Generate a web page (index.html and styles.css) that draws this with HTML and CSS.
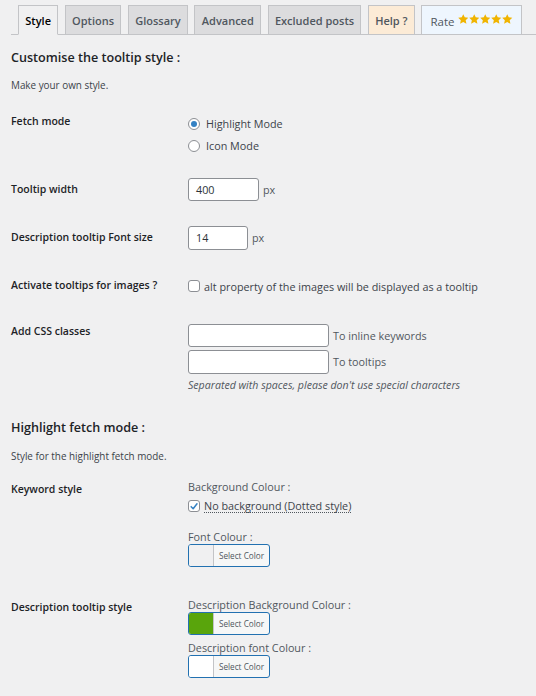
FILE: index.html
```html
<!DOCTYPE html>
<html>
<head>
<meta charset="utf-8">
<link rel="stylesheet" href="styles.css">
</head>
<body>
<div class="wrap">
  <nav class="tabs">
    <a class="tab active">Style</a>
    <a class="tab">Options</a>
    <a class="tab">Glossary</a>
    <a class="tab">Advanced</a>
    <a class="tab">Excluded posts</a>
    <a class="tab tab-help">Help ?</a>
    <a class="tab tab-rate">Rate
      <span class="stars">
        <svg viewBox="0 0 10 10" class="star"><path d="M5 0.2 L6.4 3.2 L9.8 3.6 L7.3 5.9 L8.0 9.4 L5 7.7 L2.0 9.4 L2.7 5.9 L0.2 3.6 L3.6 3.2 Z"/></svg>
        <svg viewBox="0 0 10 10" class="star"><path d="M5 0.2 L6.4 3.2 L9.8 3.6 L7.3 5.9 L8.0 9.4 L5 7.7 L2.0 9.4 L2.7 5.9 L0.2 3.6 L3.6 3.2 Z"/></svg>
        <svg viewBox="0 0 10 10" class="star"><path d="M5 0.2 L6.4 3.2 L9.8 3.6 L7.3 5.9 L8.0 9.4 L5 7.7 L2.0 9.4 L2.7 5.9 L0.2 3.6 L3.6 3.2 Z"/></svg>
        <svg viewBox="0 0 10 10" class="star"><path d="M5 0.2 L6.4 3.2 L9.8 3.6 L7.3 5.9 L8.0 9.4 L5 7.7 L2.0 9.4 L2.7 5.9 L0.2 3.6 L3.6 3.2 Z"/></svg>
        <svg viewBox="0 0 10 10" class="star"><path d="M5 0.2 L6.4 3.2 L9.8 3.6 L7.3 5.9 L8.0 9.4 L5 7.7 L2.0 9.4 L2.7 5.9 L0.2 3.6 L3.6 3.2 Z"/></svg>
      </span>
    </a>
  </nav>

  <h2 class="section-title title-first">Customise the tooltip style :</h2>
  <p class="section-desc">Make your own style.</p>

  <div class="row row-fetch">
    <div class="label">Fetch mode</div>
    <div class="field">
      <div class="radio-line"><span class="radio checked"></span>Highlight Mode</div>
      <div class="radio-line"><span class="radio"></span>Icon Mode</div>
    </div>
  </div>

  <div class="row row-width">
    <div class="label label-input">Tooltip width</div>
    <div class="field inline">
      <div class="input w-71">400</div><span class="unit">px</span>
    </div>
  </div>

  <div class="row row-size">
    <div class="label label-input">Description tooltip Font size</div>
    <div class="field inline">
      <div class="input w-60">14</div><span class="unit">px</span>
    </div>
  </div>

  <div class="row row-images">
    <div class="label">Activate tooltips for images ?</div>
    <div class="field">
      <div class="check-line"><span class="checkbox"></span>alt property of the images will be displayed as a tooltip</div>
    </div>
  </div>

  <div class="row row-css">
    <div class="label">Add CSS classes</div>
    <div class="field">
      <div class="inline"><div class="input w-141"></div><span class="unit">To inline keywords</span></div>
      <div class="inline gap-top"><div class="input w-141"></div><span class="unit">To tooltips</span></div>
      <p class="note">Separated with spaces, please don't use special characters</p>
    </div>
  </div>

  <h2 class="section-title title-second">Highlight fetch mode :</h2>
  <p class="section-desc">Style for the highlight fetch mode.</p>

  <div class="row row-keyword">
    <div class="label label-sub">Keyword style</div>
    <div class="field">
      <div class="sub">Background Colour :</div>
      <div class="check-line check-dotted"><span class="checkbox checked"><svg viewBox="0 0 12 12"><path d="M2.6 6.2 L5 8.7 L9.6 2.8"/></svg></span><span class="dotted">No background (Dotted style)</span></div>
      <div class="sub sub-gap">Font Colour :</div>
      <div class="color-btn"><span class="swatch swatch-empty"></span><span class="color-text">Select Color</span></div>
    </div>
  </div>

  <div class="row row-desc">
    <div class="label label-sub">Description tooltip style</div>
    <div class="field">
      <div class="sub">Description Background Colour :</div>
      <div class="color-btn"><span class="swatch swatch-green"></span><span class="color-text">Select Color</span></div>
      <div class="sub sub-gap2">Description font Colour :</div>
      <div class="color-btn"><span class="swatch swatch-white"></span><span class="color-text">Select Color</span></div>
    </div>
  </div>
</div>
</body>
</html>
```

FILE: styles.css
```css
html, body {
  margin: 0;
  padding: 0;
  background: #f0f0f1;
}
body {
  font-family: "Open Sans", "Noto Sans", sans-serif;
  color: #3c434a;
  width: 536px;
  height: 696px;
  overflow: hidden;
}
.wrap {
  padding-left: 11px;
  display: flex;
  flex-direction: column;
}

/* Tabs */
.tabs {
  display: flex;
  gap: 6.5px;
  margin-top: 5px;
  padding-left: 7px;
  height: 29px;
  border-bottom: 1px solid #c3c4c7;
}
.tab {
  box-sizing: border-box;
  height: 30px;
  padding: 0 6.3px;
  display: flex;
  align-items: center;
  border: 1px solid #c3c4c7;
  background: #dcdcde;
  color: #50575e;
  font-size: 11px;
  font-weight: 600;
  white-space: nowrap;
}
.tab.active {
  background: #f0f0f1;
  border-bottom-color: #f0f0f1;
  color: #000;
}
.tab-help {
  background: #fcebd6;
}
.tab-rate {
  background: #eef6fe;
  padding: 3px 8px 0 8px;
  font-weight: 400;
  font-size: 11.5px;
  gap: 4px;
}
.stars {
  display: flex;
  gap: 0.5px;
  margin-top: -4px;
}
.star {
  width: 10.5px;
  height: 10.5px;
  fill: #f0b400;
}

/* Section */
.section-title {
  margin: 0;
  font-size: 12.6px;
  font-weight: 600;
  line-height: 17px;
  color: #1d2327;
}
.title-first { margin-top: 13.5px; }
.title-second { margin-top: 26.5px; }
.section-desc {
  margin: 12.5px 0 0;
  font-size: 9.9px;
  line-height: 14px;
  color: #3c434a;
}

/* Rows */
.row {
  display: grid;
  grid-template-columns: 177px 1fr;
  align-items: start;
}
.label {
  font-size: 10.5px;
  font-weight: 600;
  line-height: 15px;
  color: #1d2327;
}
.label-input { padding-top: 4px; }
.label-sub { padding-top: 3px; }
.row-fetch { margin-top: 21.5px; }
.row-width { margin-top: 22px; }
.row-size { margin-top: 25px; }
.row-images { margin-top: 28.5px; }
.row-css { margin-top: 29.5px; }
.row-keyword { margin-top: 16.5px; }
.row-desc { margin-top: 29.5px; }

.field {
  font-size: 10.8px;
  line-height: 15px;
  color: #3c434a;
}
.inline {
  display: flex;
  align-items: center;
}
.gap-top { margin-top: 3px; }

.radio-line {
  display: flex;
  align-items: center;
  height: 20px;
}
.radio-line + .radio-line { margin-top: 2px; }
.radio {
  box-sizing: border-box;
  width: 12px;
  height: 12px;
  border: 1px solid #8c8f94;
  border-radius: 50%;
  background: #fff;
  margin-right: 6px;
  display: flex;
  align-items: center;
  justify-content: center;
}
.radio.checked::after {
  content: "";
  width: 6px;
  height: 6px;
  border-radius: 50%;
  background: #3582c4;
}

.input {
  box-sizing: border-box;
  height: 23.5px;
  border: 1px solid #8c8f94;
  border-radius: 3px;
  background: #fff;
  padding: 0 7px;
  display: flex;
  align-items: center;
  color: #2c3338;
  font-size: 10.8px;
}
.w-71 { width: 71px; }
.w-60 { width: 60px; }
.w-141 { width: 141px; }
.unit {
  margin-left: 4px;
  color: #50575e;
}

.check-line {
  display: flex;
  align-items: center;
  height: 16px;
}
.checkbox {
  box-sizing: border-box;
  width: 12px;
  height: 12px;
  border: 1px solid #8c8f94;
  border-radius: 3px;
  background: #fff;
  margin-right: 4px;
  display: flex;
  align-items: center;
  justify-content: center;
}
.checkbox svg {
  width: 11px;
  height: 11px;
  fill: none;
  stroke: #3582c4;
  stroke-width: 1.8;
  stroke-linecap: round;
  stroke-linejoin: round;
}
.check-dotted { margin-top: 4px; }
.dotted {
  border-bottom: 1px dotted #50575e;
  line-height: 13px;
}

.note {
  margin: 4px 0 0;
  font-size: 10.6px;
  font-style: italic;
  color: #50575e;
}

.sub {
  color: #50575e;
}
.sub-gap { margin-top: 14.5px; }
.sub-gap2 { margin-top: 4.5px; }

.color-btn {
  box-sizing: border-box;
  width: 82px;
  height: 23.5px;
  border: 1px solid #2271b1;
  border-radius: 3px;
  background: #f6f7f7;
  display: flex;
  overflow: hidden;
}
.swatch {
  width: 24px;
  border-right: 1px solid #c3c4c7;
}
.swatch-empty { background: #f0f0f1; }
.swatch-green { background: #59a50c; }
.swatch-white { background: #fff; }
.color-text {
  flex: 1;
  display: flex;
  align-items: center;
  justify-content: center;
  font-size: 8.2px;
  color: #50575e;
}
```
